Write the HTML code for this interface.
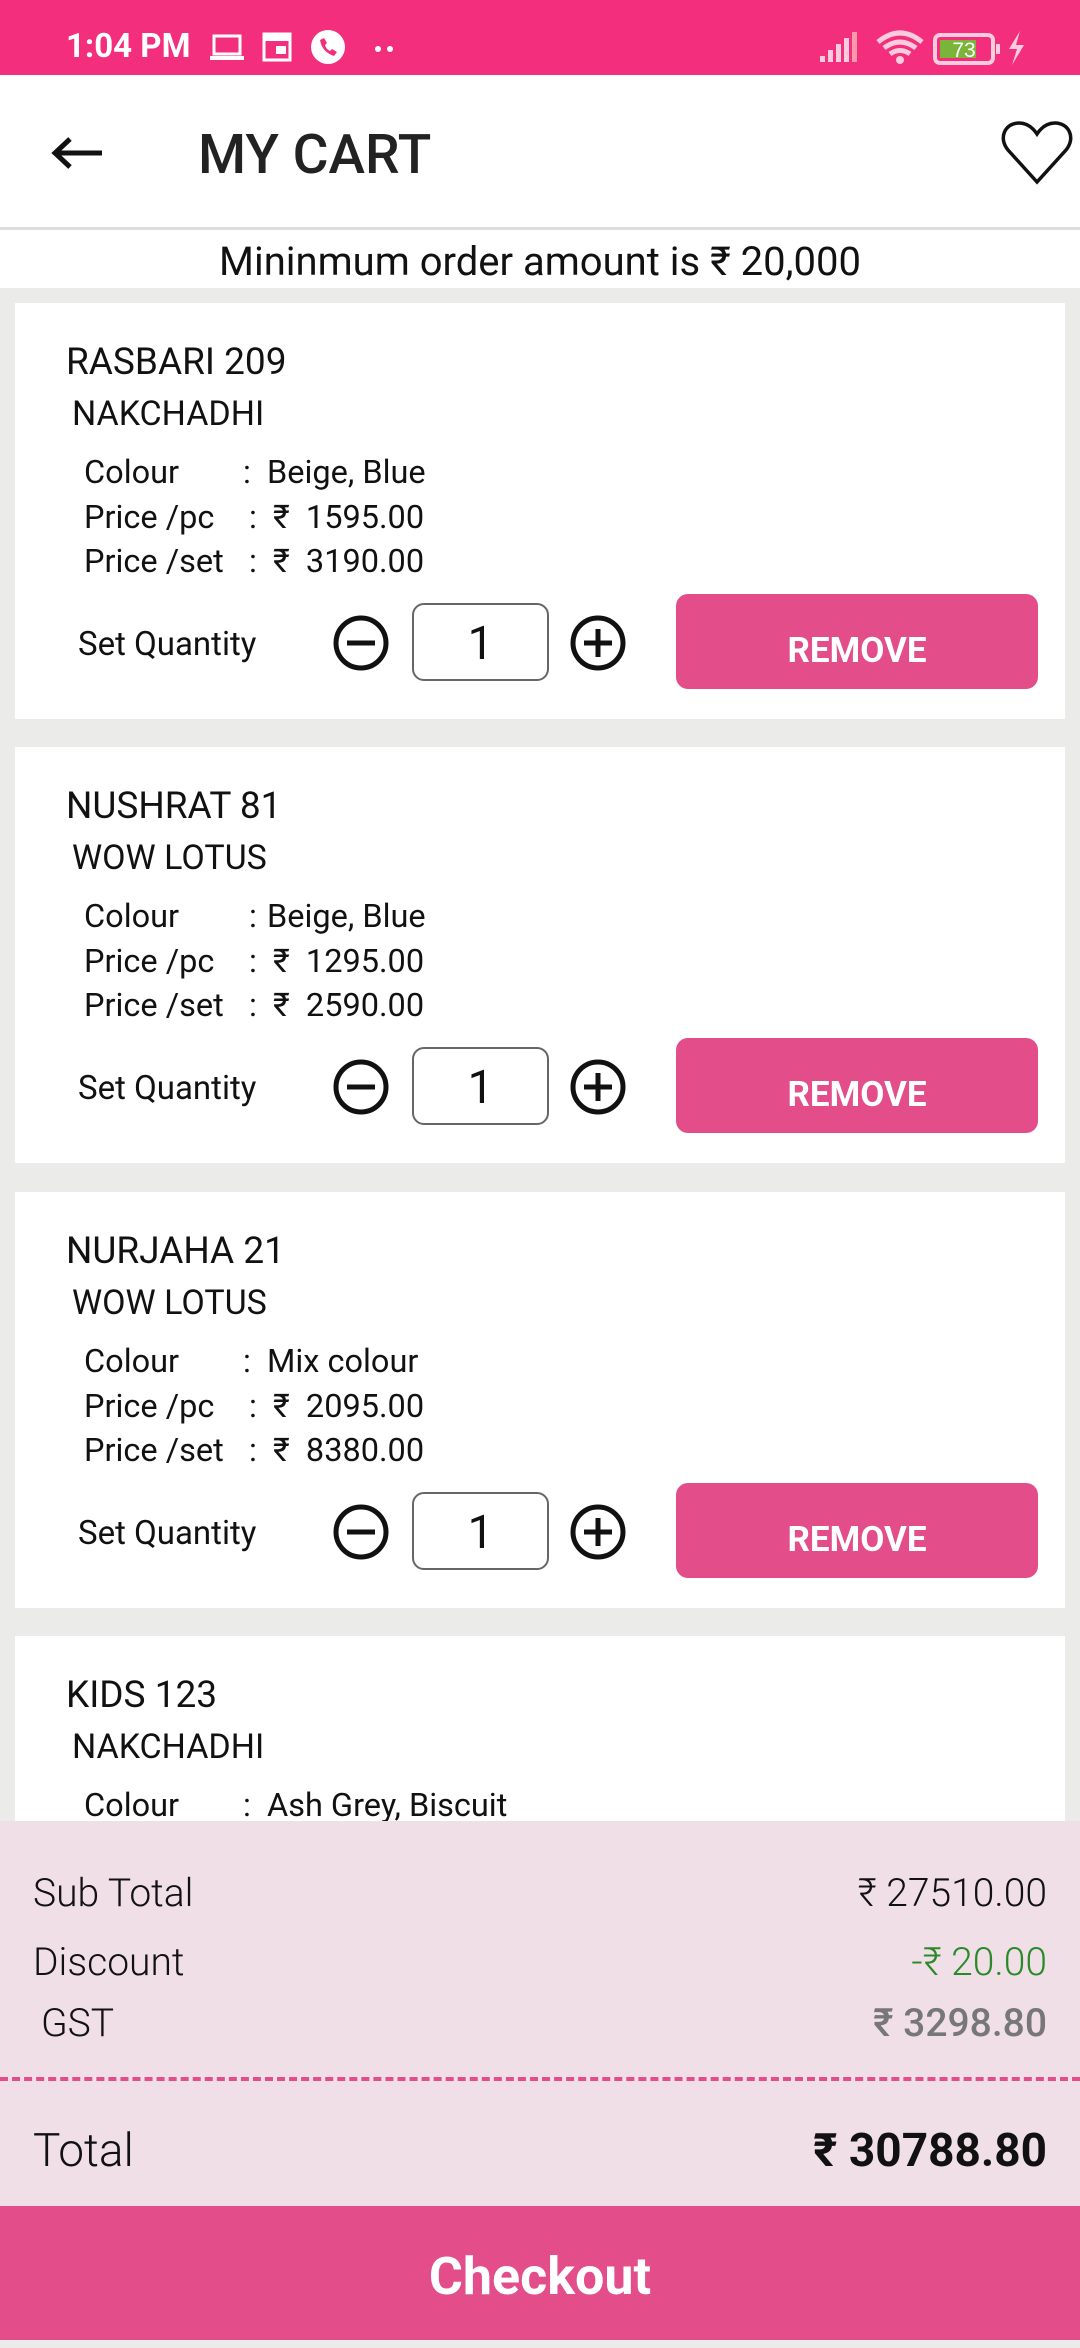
<!DOCTYPE html>
<html><head><meta charset="utf-8"><style>
*{margin:0;padding:0;box-sizing:border-box}
body{width:1080px;height:2340px;overflow:hidden;background:#ebebea;font-family:"Roboto","Liberation Sans",sans-serif;position:relative;color:#111}
.a{position:absolute;white-space:nowrap}
.sb{left:0;top:0;width:1080px;height:75px;background:#f22e7d}
.hd{left:0;top:75px;width:1080px;height:155px;background:#fff;border-bottom:3px solid #ddd}
.mo{left:0;top:236px;width:1080px;height:52px;text-align:center;font-size:40px;line-height:52px}
.mobg{left:0;top:230px;width:1080px;height:58px;background:#fff}
.card{left:15px;width:1050px;height:416px;background:#fff}
.t{font-size:37px;left:51px;top:38px}
.s{font-size:34px;left:57px;top:91px}
.r{font-size:32.5px;left:69px}
.c{position:absolute;left:159px}
.v{position:absolute;left:183px}
.p{position:absolute;left:189px}
.rem{left:661px;top:291px;width:362px;height:95px;background:#e24d8a;border-radius:12px;color:#fff;font-weight:bold;font-size:35px;text-align:center;line-height:114px}
.box{left:397px;top:300px;width:137px;height:78px;border:2.5px solid #666;border-radius:12px;text-align:center;font-size:46px;line-height:78px}
.bp{left:0;top:1821px;width:1080px;height:385px;background:#f1dfe7}
.sl{font-size:39px;font-weight:300;left:33px}
.sr{font-size:39px;font-weight:300;right:33px}
.co{left:0;top:2206px;width:1080px;height:134px;background:#e24d8a;color:#fff;font-weight:bold;font-size:52px;text-align:center;line-height:142px}
</style></head><body>
<div class="a sb"></div>
<div class="a" style="left:66px;top:22px;color:#fff;font-size:33px;font-weight:bold;line-height:50px">1:04 PM</div>
<svg class="a" style="left:210px;top:30px" width="200" height="40" viewBox="0 0 200 40">
<rect x="4" y="6" width="26" height="18" fill="none" stroke="#fff" stroke-width="3"/><rect x="0" y="26" width="34" height="4" fill="#fff"/>
<rect x="54" y="4" width="26" height="26" fill="none" stroke="#fff" stroke-width="3"/><rect x="54" y="4" width="26" height="7" fill="#fff"/><rect x="66" y="16" width="10" height="8" fill="#fff"/>
<circle cx="118" cy="17" r="17" fill="#fff"/><path d="M110 10q2 12 14 16l3-4-5-3-2 2q-4-2-5-6l2-2-3-5z" fill="#f22e7d"/>
<circle cx="168" cy="19" r="3" fill="#fff"/><circle cx="180" cy="19" r="3" fill="#fff"/></svg>
<svg class="a" style="left:818px;top:28px" width="215" height="40" viewBox="0 0 215 40">
<path d="M2 34h5v-6h-5zM10 34h5v-12h-5zM18 34h5v-18h-5zM26 34h5v-24h-5z" fill="#fcd"/><rect x="34" y="4" width="5" height="30" fill="#f9a"/>
<path d="M60 14q22-18 44 0M66 20q16-12 32 0M72 26q10-7 20 0" stroke="#fcd" stroke-width="5" fill="none"/><circle cx="82" cy="32" r="4" fill="#fcd"/>
<rect x="117" y="7" width="58" height="28" rx="5" fill="none" stroke="#fcd" stroke-width="4"/><rect x="122" y="12" width="36" height="18" fill="#7ab53a"/>
<text x="146" y="29" font-size="21" fill="#fff" text-anchor="middle" font-family="Liberation Sans">73</text><rect x="178" y="16" width="4" height="10" fill="#fcd"/>
<path d="M202 3l-11 18h8l-5 16 12-20h-8z" fill="#fcd"/></svg>
<div class="a hd"></div>
<svg class="a" style="left:50px;top:135px" width="56" height="36" viewBox="0 0 56 36"><path d="M52 18H6M20 4L5 18l15 14" stroke="#111" stroke-width="5" fill="none"/></svg>
<div class="a" style="left:198px;top:123px;font-size:55px;font-weight:500;color:#222">MY CART</div>
<svg class="a" style="left:1000px;top:120px" width="74" height="66" viewBox="0 0 74 66"><path d="M37 62L8 30C-2 18 5 3 19 3c8 0 14 5 18 11 4-6 10-11 18-11 14 0 21 15 11 27z" fill="none" stroke="#111" stroke-width="3.5"/></svg>
<div class="a mobg"></div>
<div class="a mo">Mininmum order amount is ₹ 20,000</div>

<div class="a card" style="top:303px">
<div class="a t">RASBARI 209</div><div class="a s">NAKCHADHI</div>
<div class="a r" style="top:150px">Colour<span class="c" style="left:159px">:</span><span class="v">Beige, Blue</span></div>
<div class="a r" style="top:195px">Price /pc<span class="c" style="left:165px">:</span><span class="p">₹&nbsp; 1595.00</span></div>
<div class="a r" style="top:239px">Price /set<span class="c" style="left:165px">:</span><span class="p">₹&nbsp; 3190.00</span></div>
<div class="a r" style="left:63px;top:322px;font-size:33px">Set Quantity</div>
<svg class="a" style="left:316px;top:310px" width="60" height="60"><circle cx="30" cy="30" r="25" fill="none" stroke="#111" stroke-width="5"/><path d="M16 30h28" stroke="#111" stroke-width="5"/></svg>
<div class="a box">1</div>
<svg class="a" style="left:553px;top:310px" width="60" height="60"><circle cx="30" cy="30" r="25" fill="none" stroke="#111" stroke-width="5"/><path d="M16 30h28M30 16v28" stroke="#111" stroke-width="5"/></svg>
<div class="a rem">REMOVE</div>
</div>

<div class="a card" style="top:747px">
<div class="a t">NUSHRAT 81</div><div class="a s">WOW LOTUS</div>
<div class="a r" style="top:150px">Colour<span class="c" style="left:165px">:</span><span class="v">Beige, Blue</span></div>
<div class="a r" style="top:195px">Price /pc<span class="c" style="left:165px">:</span><span class="p">₹&nbsp; 1295.00</span></div>
<div class="a r" style="top:239px">Price /set<span class="c" style="left:165px">:</span><span class="p">₹&nbsp; 2590.00</span></div>
<div class="a r" style="left:63px;top:322px;font-size:33px">Set Quantity</div>
<svg class="a" style="left:316px;top:310px" width="60" height="60"><circle cx="30" cy="30" r="25" fill="none" stroke="#111" stroke-width="5"/><path d="M16 30h28" stroke="#111" stroke-width="5"/></svg>
<div class="a box">1</div>
<svg class="a" style="left:553px;top:310px" width="60" height="60"><circle cx="30" cy="30" r="25" fill="none" stroke="#111" stroke-width="5"/><path d="M16 30h28M30 16v28" stroke="#111" stroke-width="5"/></svg>
<div class="a rem">REMOVE</div>
</div>

<div class="a card" style="top:1192px">
<div class="a t">NURJAHA 21</div><div class="a s">WOW LOTUS</div>
<div class="a r" style="top:150px">Colour<span class="c" style="left:159px">:</span><span class="v">Mix colour</span></div>
<div class="a r" style="top:195px">Price /pc<span class="c" style="left:165px">:</span><span class="p">₹&nbsp; 2095.00</span></div>
<div class="a r" style="top:239px">Price /set<span class="c" style="left:165px">:</span><span class="p">₹&nbsp; 8380.00</span></div>
<div class="a r" style="left:63px;top:322px;font-size:33px">Set Quantity</div>
<svg class="a" style="left:316px;top:310px" width="60" height="60"><circle cx="30" cy="30" r="25" fill="none" stroke="#111" stroke-width="5"/><path d="M16 30h28" stroke="#111" stroke-width="5"/></svg>
<div class="a box">1</div>
<svg class="a" style="left:553px;top:310px" width="60" height="60"><circle cx="30" cy="30" r="25" fill="none" stroke="#111" stroke-width="5"/><path d="M16 30h28M30 16v28" stroke="#111" stroke-width="5"/></svg>
<div class="a rem">REMOVE</div>
</div>

<div class="a card" style="top:1636px">
<div class="a t">KIDS 123</div><div class="a s">NAKCHADHI</div>
<div class="a r" style="top:150px">Colour<span class="c" style="left:159px">:</span><span class="v">Ash Grey, Biscuit</span></div>
</div>

<div class="a bp"></div>
<div class="a sl" style="top:1870px">Sub Total</div><div class="a sr" style="top:1870px">₹ 27510.00</div>
<div class="a sl" style="top:1939px">Discount</div><div class="a sr" style="top:1939px;color:#2a8a2a">-₹ 20.00</div>
<div class="a sl" style="top:2000px;left:41px">GST</div><div class="a sr" style="top:2000px;color:#777;font-weight:500">₹ 3298.80</div>
<div class="a" style="left:0;top:2077px;width:1080px;border-top:4px dashed #e24d8a"></div>
<div class="a sl" style="top:2124px;font-size:46px">Total</div><div class="a sr" style="top:2124px;font-size:46px;font-weight:bold">₹ 30788.80</div>
<div class="a co">Checkout</div>
</body></html>
